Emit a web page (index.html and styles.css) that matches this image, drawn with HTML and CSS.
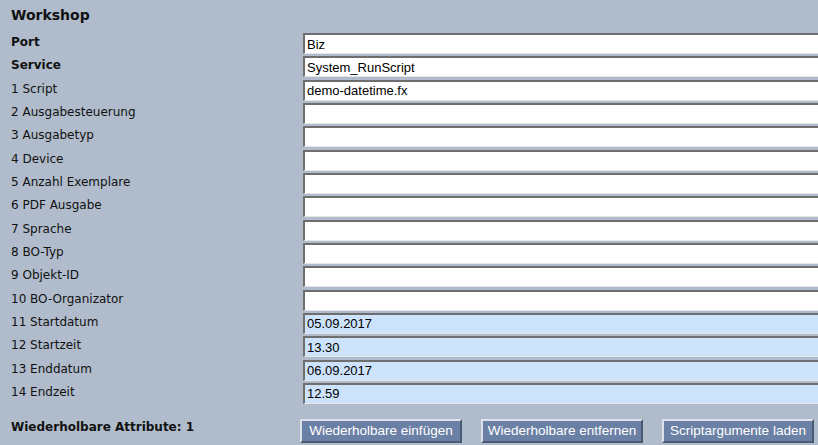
FILE: index.html
```html
<!DOCTYPE html>
<html lang="de">
<head>
  <meta charset="UTF-8">
  <title>Workshop</title>
  <link rel="stylesheet" href="styles.css">
</head>
<body>

  <h2>Workshop</h2>

  <form class="fields">
    <label class="bold">Port</label>
    <input type="text" value="Biz">
    <label class="bold">Service</label>
    <input type="text" value="System_RunScript">
    <label>1 Script</label>
    <input type="text" value="demo-datetime.fx">
    <label>2 Ausgabesteuerung</label>
    <input type="text" value="">
    <label>3 Ausgabetyp</label>
    <input type="text" value="">
    <label>4 Device</label>
    <input type="text" value="">
    <label>5 Anzahl Exemplare</label>
    <input type="text" value="">
    <label>6 PDF Ausgabe</label>
    <input type="text" value="">
    <label>7 Sprache</label>
    <input type="text" value="">
    <label>8 BO-Typ</label>
    <input type="text" value="">
    <label>9 Objekt-ID</label>
    <input type="text" value="">
    <label>10 BO-Organizator</label>
    <input type="text" value="">
    <label>11 Startdatum</label>
    <input type="text" class="filled" value="05.09.2017">
    <label>12 Startzeit</label>
    <input type="text" class="filled" value="13.30">
    <label>13 Enddatum</label>
    <input type="text" class="filled" value="06.09.2017">
    <label>14 Endzeit</label>
    <input type="text" class="filled" value="12.59">
  </form>

  <div class="footer">
    <span class="repeat">Wiederholbare Attribute: 1</span>
    <div class="buttons">
      <button type="button" class="wide">Wiederholbare einfügen</button>
      <button type="button" class="wide">Wiederholbare entfernen</button>
      <button type="button">Scriptargumente laden</button>
    </div>
  </div>

</body>
</html>
```

FILE: styles.css
```css
html, body {
  overflow: hidden;
}
body {
  margin: 0;
  padding: 0 0 0 11px;
  width: 818px;
  height: 445px;
  box-sizing: border-box;
  background: #b0bccb;
  color: #111;
  font-family: "DejaVu Sans", Verdana, sans-serif;
  font-size: 12px;
}
h2 {
  margin: 0;
  padding-top: 7px;
  height: 26px;
  font-size: 14px;
  font-weight: bold;
}
.fields {
  display: grid;
  grid-template-columns: 292px 560px;
  grid-auto-rows: 21px;
  row-gap: 2.33px;
}
.fields label {
  align-self: center;
  margin-top: -3px;
}
.bold {
  font-weight: bold;
}
.fields input {
  margin: 0;
  height: 21px;
  box-sizing: border-box;
  padding: 0 2px;
  border-style: solid;
  border-width: 2px 1px 1px 2px;
  border-color: #6e6e6e #e6e6e6 #e6e6e6 #6e6e6e;
  background: #fff;
  font-family: "Liberation Sans", Arial, sans-serif;
  font-size: 13px;
  color: #000;
}
.fields input.filled {
  background: #cce3fb;
}
.footer {
  display: flex;
  align-items: center;
  margin-top: 15px;
}
.repeat {
  width: 289px;
  font-weight: bold;
  margin-top: -8px;
}
.buttons {
  display: flex;
  gap: 19px;
}
.buttons button {
  height: 24px;
  width: 152px;
  padding: 0;
  white-space: nowrap;
  background: #6b80a5;
  color: #fff;
  border: 2px solid;
  border-color: #dde2ea #4b5a73 #4b5a73 #dde2ea;
  font-family: "Liberation Sans", Arial, sans-serif;
  font-size: 13.5px;
}
.buttons button.wide {
  width: 162px;
}
```
